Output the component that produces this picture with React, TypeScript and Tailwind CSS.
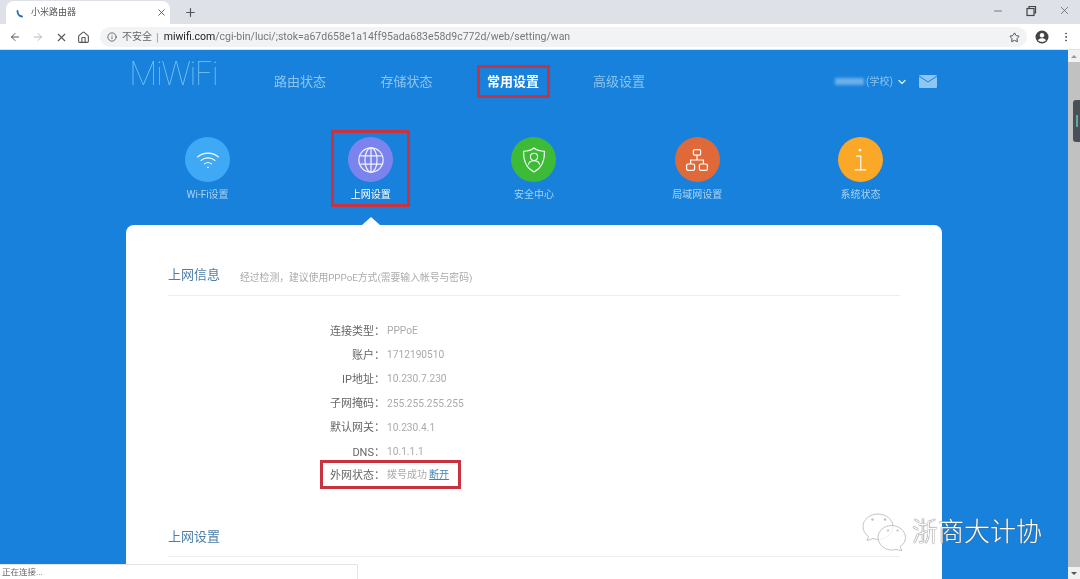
import { ArrowLeft, ArrowRight, X, Home, Info, Star, EllipsisVertical, Plus, Minus, ChevronDown } from "lucide-react";

const cjk = "font-['Roboto','Noto_Sans_CJK_SC',sans-serif]";

function WifiIcon() {
  return (
    <svg viewBox="0 0 30 30" className="w-[26px] h-[26px]" fill="none" stroke="#fff" strokeWidth="1.3" strokeLinecap="round">
      <path d="M3 11.5C10 5.5 20 5.5 27 11.5" />
      <path d="M7 15.5C11.8 11.5 18.2 11.5 23 15.5" />
      <path d="M11 19.5C13.4 17.6 16.6 17.6 19 19.5" />
      <circle cx="15" cy="23.5" r="1" fill="#fff" stroke="none" />
    </svg>
  );
}
function GlobeIcon() {
  return (
    <svg viewBox="0 0 30 30" className="w-[28px] h-[28px]" fill="none" stroke="#f4f4ff" strokeWidth="1.3">
      <circle cx="15" cy="15" r="13" />
      <ellipse cx="15" cy="15" rx="6.5" ry="13" />
      <path d="M15 2V28M3.5 10.5H26.5M3.5 19.5H26.5" />
    </svg>
  );
}
function ShieldIcon() {
  return (
    <svg viewBox="0 0 30 34" className="w-[24px] h-[28px]" fill="none" stroke="#fff" strokeWidth="1.3">
      <path d="M15 2C18 4.5 23 6 28 6C28.5 17 26 26 15 32C4 26 1.5 17 2 6C7 6 12 4.5 15 2Z" />
      <circle cx="15" cy="13" r="4.5" />
      <path d="M8 23C8.5 19.5 11 18 15 18C19 18 21.5 19.5 22 23" />
    </svg>
  );
}
function LanIcon() {
  return (
    <svg viewBox="0 0 30 30" className="w-[24px] h-[24px]" fill="none" stroke="#fff" strokeWidth="1.5">
      <rect x="10.5" y="2" width="9" height="7" rx="1.5" />
      <rect x="2" y="20" width="10" height="8" rx="2" />
      <rect x="18" y="20" width="10" height="8" rx="2" />
      <path d="M15 9V15M7 20V15H23V20" />
    </svg>
  );
}
function InfoIcon() {
  return (
    <svg viewBox="0 0 30 34" className="w-[24px] h-[26px]" fill="none" stroke="#fff" strokeWidth="1.5">
      <circle cx="15" cy="4" r="1.8" fill="#fff" stroke="none" />
      <path d="M10 12H16V30M8 30H23" />
    </svg>
  );
}
function ProfileIcon() {
  return (
    <svg viewBox="0 0 14 14" className="ml-[8px] w-[14px] h-[14px]">
      <circle cx="7" cy="7" r="6.5" fill="#444" />
      <circle cx="7" cy="5.2" r="2.2" fill="#fff" />
      <path d="M3 10.3C4 8.7 5.5 8.3 7 8.3C8.5 8.3 10 8.7 11 10.3C10 11.4 8.5 12 7 12C5.5 12 4 11.4 3 10.3Z" fill="#fff" />
    </svg>
  );
}
function WeChatBubbles() {
  return (
    <svg viewBox="0 0 44 38" className="w-[44px] h-[38px]" fill="#ffffff" fillOpacity="0.75" stroke="#b5b5b5" strokeWidth="0.8">
      <path d="M16 1C8 1 1 6.5 1 13.5C1 18 3.5 21.5 6.5 23.5L5 27.5L11 25.5C12.5 26 14.5 26.5 16.5 26.5C24 26.5 31 20.5 31 13.5C31 6.5 24 1 16 1Z" />
      <path d="M29.5 12.5C22 12.5 16 18 16 24.5C16 31 22 37 29.5 37C31 37 32.5 36.8 34 36.3L40 38L38 33.5C41.5 31.5 43.5 28 43.5 24.5C43.5 18 37 12.5 29.5 12.5Z" />
      <circle cx="10.5" cy="6.5" r="1.2" fill="#aaa" stroke="none" />
      <circle cx="23" cy="6.5" r="1.2" fill="#aaa" stroke="none" />
      <circle cx="26" cy="17.5" r="1.1" fill="#aaa" stroke="none" />
      <circle cx="35.5" cy="17.5" r="1.1" fill="#aaa" stroke="none" />
    </svg>
  );
}

const tiles = [
  { label: "Wi-Fi设置", bg: "bg-[#3fa9f5]", icon: <WifiIcon />, active: false },
  { label: "上网设置", bg: "bg-[#7b84ee]", icon: <GlobeIcon />, active: true },
  { label: "安全中心", bg: "bg-[#3dbb36]", icon: <ShieldIcon />, active: false },
  { label: "局域网设置", bg: "bg-[#e0693a]", icon: <LanIcon />, active: false },
  { label: "系统状态", bg: "bg-[#fba828]", icon: <InfoIcon />, active: false },
];

const rows = [
  ["连接类型：", "PPPoE"],
  ["账户：", "1712190510"],
  ["IP地址：", "10.230.7.230"],
  ["子网掩码：", "255.255.255.255"],
  ["默认网关：", "10.230.4.1"],
  ["DNS：", "10.1.1.1"],
];

export default function App() {
  return (
    <div className={`h-[579px] w-[1080px] overflow-hidden relative flex flex-col bg-white ${cjk} blur-[0.5px]`}>
      {/* tab strip */}
      <div className="h-[24px] bg-[#dfe1e8] flex items-end shrink-0">
        <div className="ml-[6px] w-[164px] h-[23px] bg-white rounded-t-[8px] flex items-center pl-[8px] pr-[3px]">
          <svg viewBox="0 0 12 12" className="w-[12px] h-[12px]">
            <path d="M3.5 4C3.5 7 5 9 8 9.5" fill="none" stroke="#2a6ca8" strokeWidth="1.8" strokeLinecap="round" />
          </svg>
          <span className="ml-[5px] text-[9px] leading-none text-[#555]">小米路由器</span>
          <X className="ml-auto w-[11px] h-[11px] text-[#555]" strokeWidth={2} />
        </div>
        <Plus className="ml-[14px] mb-[5px] w-[13px] h-[13px] text-[#555]" strokeWidth={2.2} />
        <div className="ml-auto flex items-center gap-[21px] pr-[9px] pb-[7px] text-[#555]">
          <Minus className="w-[12px] h-[12px]" strokeWidth={1.5} />
          <svg viewBox="0 0 12 12" className="w-[12px] h-[12px]" fill="none" stroke="#444" strokeWidth="1.2">
            <rect x="2" y="3.5" width="7" height="7" />
            <path d="M4 3.5V1.5H10.5V8H9" />
          </svg>
          <X className="w-[13px] h-[13px]" strokeWidth={1.3} />
        </div>
      </div>
      {/* toolbar */}
      <div className="h-[25px] bg-white flex items-center shrink-0 pt-[1px] text-[#5f6368]">
        <ArrowLeft className="ml-[9px] w-[12px] h-[12px] text-[#555]" strokeWidth={2} />
        <ArrowRight className="ml-[11px] w-[12px] h-[12px] text-[#bbb]" strokeWidth={2} />
        <X className="ml-[11px] w-[13px] h-[13px] text-[#555]" strokeWidth={2} />
        <Home className="ml-[9px] w-[13px] h-[13px] text-[#555]" strokeWidth={2} />
        <div className="ml-[10px] w-[927px] h-[20px] rounded-full bg-[#f2f3f5] flex items-center pl-[7px]">
          <Info className="w-[10px] h-[10px] text-[#555]" strokeWidth={2} />
          <span className="ml-[5px] text-[10px] leading-none text-[#666]">不安全</span>
          <span className="ml-[4px] text-[11px] leading-none text-[#999]">|</span>
          <span className="ml-[5px] text-[10.5px] leading-none text-[#777] whitespace-nowrap">
            <span className="text-[#222]">miwifi.com</span>/cgi-bin/luci/;stok=a67d658e1a14ff95ada683e58d9c772d/web/setting/wan
          </span>
          <Star className="ml-auto mr-[7px] w-[11px] h-[11px] text-[#444]" strokeWidth={2} />
        </div>
        <ProfileIcon />
        <EllipsisVertical className="ml-[11px] w-[12px] h-[12px] text-[#555]" strokeWidth={2} />
      </div>
      {/* viewport */}
      <div className="flex-1 flex min-h-0 border-t border-[#cfe6f5]">
        <div className="flex-1 bg-[#1781dc] flex flex-col min-h-0 overflow-hidden">
          {/* header */}
          <div className="h-[80px] shrink-0 flex items-start pl-[129px] pt-[15px]">
            <div className="w-[89px] -mt-[6px] h-[30px] text-[32px] leading-[30px] font-['Inter',sans-serif] font-thin tracking-[-1.6px] text-[#7fc9f8]">MiWiFi</div>
            <div className="ml-[56px] flex items-center gap-[54.5px] h-[33px] text-[13px] leading-none text-[#8cc4f0]">
              <span className="-mt-[1px]">路由状态</span>
              <span className="-mt-[1px]">存储状态</span>
              <span className="-mx-[11px] ml-[-10.5px] h-[33px] w-[73px] flex items-center justify-center border-[3px] border-[#c8333f] font-bold text-white">常用设置</span>
              <span className="-mt-[1px]">高级设置</span>
            </div>
            <div className="ml-[190px] flex items-center h-[33px]">
              <div className="w-[29px] h-[7px] bg-[#6cb0ea] blur-[1.5px]" />
              <span className="ml-[2px] text-[10px] leading-none text-[#8cc4f0]">(学校)</span>
              <ChevronDown className="ml-[3px] w-[12px] h-[12px] text-[#c8e6fb]" strokeWidth={3} />
              <div className="ml-[11px] w-[18px] h-[13px] bg-[#8cc8f3] overflow-hidden rounded-[1px]">
                <svg viewBox="0 0 18 13" className="w-[18px] h-[13px]" fill="none" stroke="#1781dc" strokeWidth="1">
                  <path d="M0 1L9 7L18 1" />
                </svg>
              </div>
            </div>
          </div>
          {/* tiles */}
          <div className="ml-[126px] w-[816px] grid grid-cols-5 shrink-0">
            {tiles.map((t) => (
              <div key={t.label} className="flex justify-center">
                <div className={`w-[79px] h-[77px] border-[3px] flex flex-col items-center pt-[4px] ${t.active ? "border-[#c8333f]" : "border-transparent"}`}>
                  <div className={`w-[45px] h-[45px] rounded-full flex items-center justify-center shrink-0 ${t.bg}`}>{t.icon}</div>
                  <div className={`mt-[6px] h-[14px] text-[10px] leading-[14px] whitespace-nowrap ${t.active ? "text-white" : "text-[#a9d3f4]"}`}>{t.label}</div>
                </div>
              </div>
            ))}
          </div>
          {/* card */}
          <div className="relative ml-[126px] mt-[18px] w-[816px] flex-1 min-h-0 bg-white rounded-t-[8px] px-[42px] pt-[39px]">
            <div className="absolute -top-[8px] left-[236px] w-0 h-0 border-x-[9px] border-x-transparent border-b-[8px] border-b-white" />
            <div className="flex items-start h-[32px] border-b border-[#eeeeee]">
              <span className="text-[13px] leading-[22px] text-[#4d7fa8]">上网信息</span>
              <span className="ml-[20px] mt-[3px] text-[9.8px] leading-[22px] text-[#aaaaaa]">经过检测，建议使用PPPoE方式(需要输入帐号与密码)</span>
            </div>
            <div className="mt-[23px] text-[11px]">
              {rows.map(([k, v]) => (
                <div key={k} className="flex items-center h-[24.2px]">
                  <div className="w-[217px] text-right text-[#666666] leading-none">{k}</div>
                  <div className="ml-[2px] text-[10.2px] text-[#aaaaaa] leading-none">{v}</div>
                </div>
              ))}
              <div className="-mt-[4px] ml-[152px] w-[141px] h-[29px] border-[3px] border-[#c8333f] flex items-center pt-[1px]">
                <div className="w-[62px] text-right text-[#666666] leading-none">外网状态：</div>
                <div className="ml-[2px] text-[10px] text-[#aaaaaa] leading-none">拨号成功</div>
                <div className="ml-[2px] text-[10px] text-[#3f86b8] leading-none underline">断开</div>
              </div>
            </div>
            <div className="mt-[35px] h-[33px] border-b border-[#eeeeee]">
              <span className="text-[13px] leading-[22px] text-[#4d7fa8]">上网设置</span>
            </div>
          </div>
        </div>
        {/* scrollbar */}
        <div className="w-[12px] bg-[#f1f1f1] flex flex-col items-center shrink-0">
          <div className="h-[12px] w-full flex items-center justify-center">
            <div className="w-0 h-0 border-x-[3px] border-x-transparent border-b-[3px] border-b-[#999]" />
          </div>
          <div className="w-full flex-1 bg-[#c1c1c1] flex flex-col items-end pt-[38px]">
            <div className="w-[7px] h-[42px] bg-[#4a5058] rounded-l-[3px] flex items-center justify-center">
              <div className="w-[2px] h-[12px] bg-[#5fa89a]" />
            </div>
          </div>
          <div className="h-[12px] w-full flex items-center justify-center">
            <div className="w-0 h-0 border-x-[3px] border-x-transparent border-t-[3px] border-t-[#555]" />
          </div>
        </div>
      </div>
      {/* status bubble */}
      <div className="absolute left-0 bottom-0 w-[358px] h-[15px] bg-white border-t border-r border-[#e4e4e4] rounded-tr-[2px] pl-[2px] text-[8.5px] leading-[14px] text-[#666]">正在连接...</div>
      {/* watermark */}
      <div className="absolute left-[862px] top-[513px] flex items-center">
        <WeChatBubbles />
        <span className="ml-[6px] text-[26px] leading-[34px] text-white font-light whitespace-nowrap [text-shadow:0_0_1px_#444,0_0_1px_#777]">浙商大计协</span>
      </div>
    </div>
  );
}
